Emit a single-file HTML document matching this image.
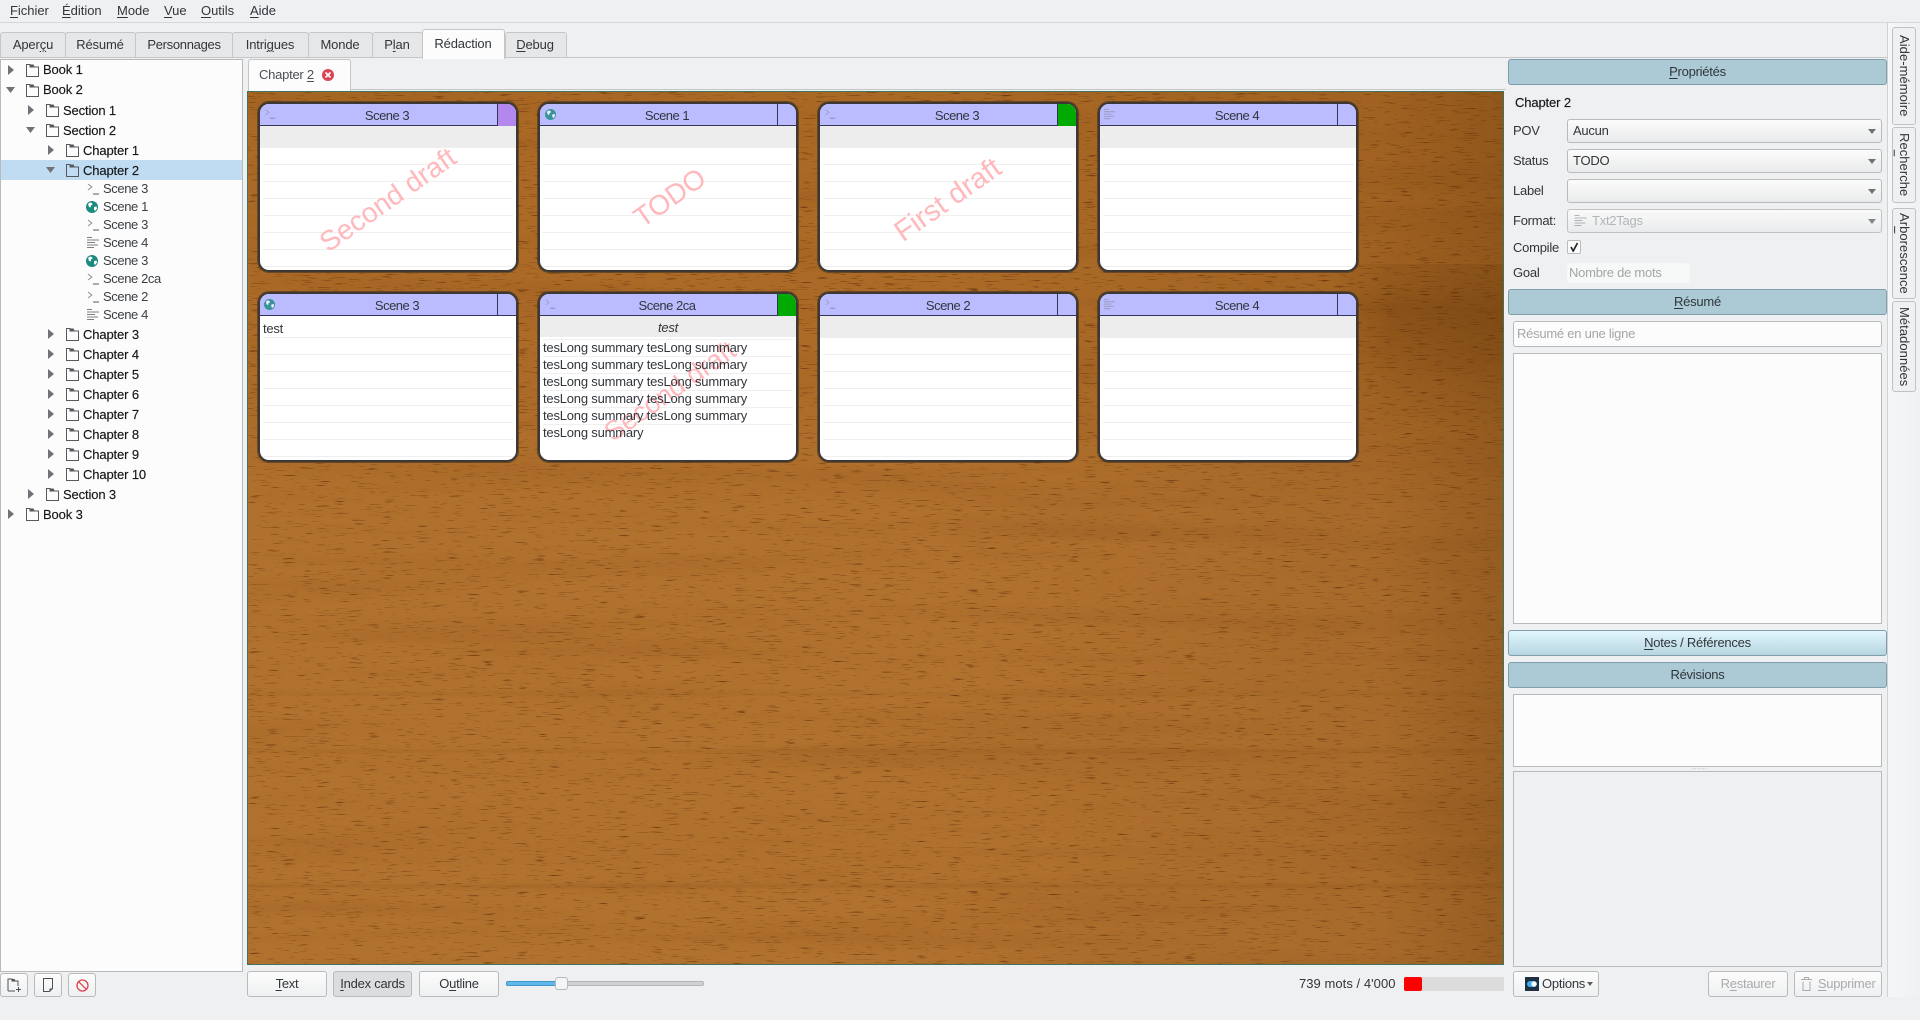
<!DOCTYPE html>
<html lang="fr"><head><meta charset="utf-8"><title>Manuskript</title>
<style>
html,body{margin:0;padding:0;width:1920px;height:1020px;overflow:hidden;background:#eff0f1}
body{position:relative;font:13px/16px "Liberation Sans",sans-serif;color:#31363b;letter-spacing:-.25px}
.a,.t,.c,.b,.tab,.hd,.box,svg.i{position:absolute}
.t{white-space:nowrap}
.c{white-space:nowrap;transform:translateX(-50%);letter-spacing:-.15px}
.m{letter-spacing:-.02px}
u{text-decoration-thickness:1px;text-underline-offset:2px}
.tab{top:32px;height:25px;background:#e6e7e8;border:1px solid #c4c6c8;border-bottom:0;border-radius:3px 3px 0 0;box-sizing:border-box}
.tr{color:#141618;letter-spacing:-.13px;-webkit-text-stroke:.15px #141618;margin-top:1px}
.sc{color:#3a3f44;letter-spacing:-.4px}
.b{box-sizing:border-box;height:26px;top:971px;border:1px solid #b8babc;border-radius:3px;background:linear-gradient(#fcfcfc,#eff0f1);text-align:center;line-height:24px}
.hd{left:1508px;width:379px;height:26px;box-sizing:border-box;border:1px solid #7f9dab;border-radius:3px;background:#abcad5;text-align:center;line-height:24px}
.combo{position:absolute;left:1567px;width:315px;height:24px;box-sizing:border-box;border:1px solid #b8babc;border-radius:3px;background:linear-gradient(#fcfcfc,#e9eaeb);line-height:22px;padding-left:5px;font-size:13px}
.combo:after{content:"";position:absolute;right:5px;top:9px;border:4px solid transparent;border-top:5px solid #6e7276;border-bottom:0}
.box{box-sizing:border-box;border:1px solid #b8babc;background:#fcfcfc}
.card{position:absolute;width:260px;height:170px;box-sizing:border-box;border:2px solid #3d3833;border-radius:11px;background:#fff;overflow:hidden;color:#31363b}
.sh{position:absolute;width:260px;height:170px;border-radius:11px;box-shadow:0 0 0 1px rgba(55,45,35,.55)}
.card .lines{position:absolute;left:3px;right:3px;top:27px;bottom:0;background:repeating-linear-gradient(transparent 0 16px,#efefef 16px 17px)}
.card .band{position:absolute;left:0;right:0;top:22px;height:22px;background:#ededed}
.card .head{position:absolute;left:0;right:0;top:0;height:22px;background:#bbf;border-bottom:1px solid #35355a;box-sizing:border-box}
.card .st{position:absolute;right:0;top:0;width:19px;height:22px;border-left:1px solid #35355a;box-sizing:border-box}
.card .wm{position:absolute;top:96px;left:128px;transform:translate(-50%,-50%) rotate(-35deg);color:#ffb8bc;font-size:28px;line-height:34px;white-space:nowrap;letter-spacing:0}
.card .ti{position:absolute;top:4px;white-space:nowrap;transform:translateX(-50%);letter-spacing:-.5px}
.card svg{position:absolute;left:5px;top:4px}
.vt{position:absolute;left:1892px;width:24px;box-sizing:border-box;border:1px solid #bfc1c3;border-radius:3px;background:#eff0f1;writing-mode:vertical-rl;text-align:center;line-height:22px;white-space:nowrap;letter-spacing:.05px}
.ln{position:absolute;background:#c4c6c8}
.p{margin-top:1px}
</style></head>
<body>
<svg width="0" height="0" style="position:absolute">
<defs>
<filter id="g1" x="0" y="0" width="100%" height="100%" color-interpolation-filters="sRGB">
<feTurbulence type="fractalNoise" baseFrequency="0.06 0.85" numOctaves="2" seed="11"/>
<feColorMatrix values="0 0 0 0 .42  0 0 0 0 .22  0 0 0 0 .05  5 0 0 0 -3.25"/>
</filter>
<filter id="g2" x="0" y="0" width="100%" height="100%" color-interpolation-filters="sRGB">
<feTurbulence type="fractalNoise" baseFrequency="0.002 0.035" numOctaves="3" seed="4"/>
<feColorMatrix values="0 0 0 0 .4  0 0 0 0 .2  0 0 0 0 .03  2.2 0 0 0 -1"/>
</filter>
<symbol id="fo" viewBox="0 0 13 13"><path d="M.5 12.500V.5h3.500v2.500h8.500v9.500z" fill="none" stroke="#55595d"/><path d="M4 .5h3.500l1.200 2.500H4z" fill="#55595d"/></symbol>
<symbol id="pr" viewBox="0 0 12 12"><path d="M1 1l3.800 3L1 7" fill="none" stroke="#8a8e92"/><path d="M6 11h6" stroke="#55595d"/></symbol>
<symbol id="tx" viewBox="0 0 12 12"><path d="M0 .5h5M0 3h12M0 5.500h8M0 8h11M0 10.500h7" stroke="#7b7f83"/></symbol>
<symbol id="gl" viewBox="0 0 12 12"><circle cx="6" cy="6" r="6" fill="#1b8a80"/><path d="M2 3l2-1.500 2 .5 .5 1.500-1.500 1-.5 2-1.500-.5zM8 6l2.500-.5.500 2-2 2.500-1-1.500z" fill="#fff"/></symbol>
</defs></svg>

<!-- menu -->
<div class="t m" style="left:10px;top:3px"><u>F</u>ichier</div>
<div class="t m" style="left:62px;top:3px"><u>É</u>dition</div>
<div class="t m" style="left:117px;top:3px"><u>M</u>ode</div>
<div class="t m" style="left:164px;top:3px"><u>V</u>ue</div>
<div class="t m" style="left:201px;top:3px"><u>O</u>utils</div>
<div class="t m" style="left:250px;top:3px"><u>A</u>ide</div>
<div class="ln" style="left:0;top:22px;width:1920px;height:1px;background:#d5d7d9"></div>

<!-- tabs -->
<div class="ln" style="left:0;top:57px;width:1888px;height:1px"></div>
<div class="tab" style="left:0;width:66px"></div><div class="c" style="left:33px;top:37px">Aper<u>ç</u>u</div>
<div class="tab" style="left:65px;width:71px"></div><div class="c" style="left:100px;top:37px">Résumé</div>
<div class="tab" style="left:135px;width:98px"></div><div class="c" style="left:184px;top:37px;letter-spacing:-.3px">Personnages</div>
<div class="tab" style="left:232px;width:77px"></div><div class="c" style="left:270px;top:37px">Intri<u>g</u>ues</div>
<div class="tab" style="left:308px;width:65px"></div><div class="c" style="left:340px;top:37px">Monde</div>
<div class="tab" style="left:372px;width:51px"></div><div class="c" style="left:397px;top:37px">P<u>l</u>an</div>
<div class="tab" style="left:505px;width:62px"></div><div class="c" style="left:535px;top:37px"><u>D</u>ebug</div>
<div class="tab" style="left:422px;width:83px;top:29px;height:30px;background:#fcfcfc"></div><div class="c" style="left:463px;top:36px">Rédaction</div>

<!-- tree -->
<div class="box" style="left:0;top:59px;width:243px;height:913px"></div>
<div class="a" style="left:1px;top:160px;width:241px;height:20px;background:#bfdcf3"></div>
<svg class="i" style="left:0;top:60px" width="110" height="470" fill="#6f7377">
<path d="M8 5l6 5-6 5zM28 45l6 5-6 5zM48 85l6 5-6 5zM48 269l6 5-6 5zM48 289l6 5-6 5zM48 309l6 5-6 5zM48 329l6 5-6 5zM48 349l6 5-6 5zM48 369l6 5-6 5zM48 389l6 5-6 5zM48 409l6 5-6 5zM28 429l6 5-6 5zM8 449l6 5-6 5z"/>
<path d="M6 27h9l-4.500 6zM26 67h9l-4.500 6zM46 107h9l-4.500 6z"/>
</svg>
<svg class="i" style="left:26px;top:64px" width="13" height="13"><use href="#fo"/></svg><div class="t tr" style="left:43px;top:62px;margin-top:0">Book 1</div>
<svg class="i" style="left:26px;top:84px" width="13" height="13"><use href="#fo"/></svg><div class="t tr" style="left:43px;top:82px;margin-top:0">Book 2</div>
<svg class="i" style="left:46px;top:104px" width="13" height="13"><use href="#fo"/></svg><div class="t tr" style="left:63px;top:102px">Section 1</div>
<svg class="i" style="left:46px;top:124px" width="13" height="13"><use href="#fo"/></svg><div class="t tr" style="left:63px;top:122px">Section 2</div>
<svg class="i" style="left:66px;top:144px" width="13" height="13"><use href="#fo"/></svg><div class="t tr" style="left:83px;top:142px">Chapter 1</div>
<svg class="i" style="left:66px;top:164px" width="13" height="13"><use href="#fo"/></svg><div class="t tr" style="left:83px;top:162px">Chapter 2</div>
<svg class="i" style="left:87px;top:183px" width="12" height="12"><use href="#pr"/></svg><div class="t sc" style="left:103px;top:181px">Scene 3</div>
<svg class="i" style="left:86px;top:201px" width="12" height="12"><use href="#gl"/></svg><div class="t sc" style="left:103px;top:199px">Scene 1</div>
<svg class="i" style="left:87px;top:219px" width="12" height="12"><use href="#pr"/></svg><div class="t sc" style="left:103px;top:217px">Scene 3</div>
<svg class="i" style="left:87px;top:237px" width="12" height="12"><use href="#tx"/></svg><div class="t sc" style="left:103px;top:235px">Scene 4</div>
<svg class="i" style="left:86px;top:255px" width="12" height="12"><use href="#gl"/></svg><div class="t sc" style="left:103px;top:253px">Scene 3</div>
<svg class="i" style="left:87px;top:273px" width="12" height="12"><use href="#pr"/></svg><div class="t sc" style="left:103px;top:271px">Scene 2ca</div>
<svg class="i" style="left:87px;top:291px" width="12" height="12"><use href="#pr"/></svg><div class="t sc" style="left:103px;top:289px">Scene 2</div>
<svg class="i" style="left:87px;top:309px" width="12" height="12"><use href="#tx"/></svg><div class="t sc" style="left:103px;top:307px">Scene 4</div>
<svg class="i" style="left:66px;top:328px" width="13" height="13"><use href="#fo"/></svg><div class="t tr" style="left:83px;top:326px">Chapter 3</div>
<svg class="i" style="left:66px;top:348px" width="13" height="13"><use href="#fo"/></svg><div class="t tr" style="left:83px;top:346px">Chapter 4</div>
<svg class="i" style="left:66px;top:368px" width="13" height="13"><use href="#fo"/></svg><div class="t tr" style="left:83px;top:366px">Chapter 5</div>
<svg class="i" style="left:66px;top:388px" width="13" height="13"><use href="#fo"/></svg><div class="t tr" style="left:83px;top:386px">Chapter 6</div>
<svg class="i" style="left:66px;top:408px" width="13" height="13"><use href="#fo"/></svg><div class="t tr" style="left:83px;top:406px">Chapter 7</div>
<svg class="i" style="left:66px;top:428px" width="13" height="13"><use href="#fo"/></svg><div class="t tr" style="left:83px;top:426px">Chapter 8</div>
<svg class="i" style="left:66px;top:448px" width="13" height="13"><use href="#fo"/></svg><div class="t tr" style="left:83px;top:446px">Chapter 9</div>
<svg class="i" style="left:66px;top:468px" width="13" height="13"><use href="#fo"/></svg><div class="t tr" style="left:83px;top:466px">Chapter 10</div>
<svg class="i" style="left:46px;top:488px" width="13" height="13"><use href="#fo"/></svg><div class="t tr" style="left:63px;top:486px">Section 3</div>
<svg class="i" style="left:26px;top:508px" width="13" height="13"><use href="#fo"/></svg><div class="t tr" style="left:43px;top:506px">Book 3</div>

<!-- chapter tab -->
<div class="ln" style="left:350px;top:89px;width:1156px;height:1px"></div>
<div class="a" style="left:248px;top:59px;width:103px;height:32px;box-sizing:border-box;background:#fcfcfc;border:1px solid #c4c6c8;border-bottom:0;border-radius:3px 3px 0 0"></div>
<div class="t" style="left:259px;top:67px;color:#4b5056">Chapter <u>2</u></div>
<svg class="i" style="left:322px;top:69px" width="12" height="12"><circle cx="6" cy="6" r="6" fill="#da4453"/><path d="M3.500 3.500l5 5M8.500 3.500l-5 5" stroke="#fff" stroke-width="1.600"/></svg>

<!-- wood -->
<div class="a" style="left:247px;top:91px;width:1257px;height:874px;box-sizing:border-box;border:1px solid #3c7460;overflow:hidden;background:#b2722f">
<div class="a" style="inset:0;background:linear-gradient(180deg,rgba(140,70,0,.22) 0,rgba(140,70,0,.16) 260px,rgba(0,0,0,0) 440px)"></div>
<div class="a" style="inset:0;background:linear-gradient(90deg,rgba(80,40,0,0) 0,rgba(80,40,0,0) 55%,rgba(80,40,0,.10) 90%,rgba(70,35,0,.26) 100%)"></div>
<svg class="a" style="left:0;top:0" width="1255" height="872">
<rect width="1255" height="872" filter="url(#g2)" opacity=".12"/>
<rect width="1255" height="872" filter="url(#g1)"/>
<rect width="1255" height="360" filter="url(#g1)" opacity=".6"/>
</svg>
<div class="a" style="left:0;right:0;top:172px;height:170px;background:linear-gradient(90deg,rgba(70,35,0,0) 1085px,rgba(70,35,0,.2) 1140px);-webkit-mask-image:linear-gradient(rgba(0,0,0,.6) 0,#000 30%,transparent 100%)"></div>
<div class="a" style="left:0;right:0;top:600px;height:4px;background:rgba(90,45,0,.06);filter:blur(1px)"></div>
<div class="a" style="left:0;right:0;top:657px;height:4px;background:rgba(90,45,0,.08);filter:blur(1px)"></div>
<div class="a" style="left:0;right:0;top:792px;height:4px;background:rgba(90,45,0,.09);filter:blur(1px)"></div>
</div>

<!-- cards -->
<div class="sh" style="left:258px;top:102px"></div><div class="sh" style="left:538px;top:102px"></div><div class="sh" style="left:818px;top:102px"></div><div class="sh" style="left:1098px;top:102px"></div>
<div class="sh" style="left:258px;top:292px"></div><div class="sh" style="left:538px;top:292px"></div><div class="sh" style="left:818px;top:292px"></div><div class="sh" style="left:1098px;top:292px"></div>
<div class="card" style="left:258px;top:102px"><div class="lines"></div><div class="band"></div><div class="wm">Second draft</div><div class="head"><div class="st" style="background:#b487ef"></div></div><svg width="10" height="12" style="opacity:.6"><use href="#pr"/></svg><div class="ti" style="left:127px">Scene 3</div></div>
<div class="card" style="left:538px;top:102px"><div class="lines"></div><div class="band"></div><div class="wm" style="left:130px;top:94px">TODO</div><div class="head"><div class="st"></div></div><svg width="11" height="11" style="left:5px;top:5px;opacity:.8"><use href="#gl"/></svg><div class="ti" style="left:127px">Scene 1</div></div>
<div class="card" style="left:818px;top:102px"><div class="lines"></div><div class="band"></div><div class="wm" style="left:128px;top:96px;font-size:29px">First draft</div><div class="head"><div class="st" style="background:#0a0"></div></div><svg width="10" height="12" style="opacity:.6"><use href="#pr"/></svg><div class="ti" style="left:137px">Scene 3</div></div>
<div class="card" style="left:1098px;top:102px"><div class="lines"></div><div class="band"></div><div class="head"><div class="st"></div></div><svg width="11" height="11" style="opacity:.55;left:4px;top:5px"><use href="#tx"/></svg><div class="ti" style="left:137px">Scene 4</div></div>

<div class="card" style="left:258px;top:292px"><div class="lines"></div><div class="head"><div class="st"></div></div><svg width="11" height="11" style="left:4px;top:5px;opacity:.8"><use href="#gl"/></svg><div class="ti" style="left:137px">Scene 3</div><div class="a t" style="left:3px;top:27px">test</div></div>
<div class="card" style="left:538px;top:292px"><div class="lines" style="top:29px;bottom:19px"></div><div class="band" style="height:21px"></div><div class="wm" style="left:130px;top:97px;font-size:27px">Second draft</div><div class="head"><div class="st" style="background:#0a0"></div></div><svg width="10" height="12" style="opacity:.6"><use href="#pr"/></svg><div class="ti" style="left:127px">Scene 2ca</div>
<div class="a t" style="left:0;right:0;top:26px;text-align:center;font-style:italic">test</div>
<div class="a t" style="left:3px;top:46px;letter-spacing:-.2px">tesLong summary tesLong summary</div>
<div class="a t" style="left:3px;top:63px;letter-spacing:-.2px">tesLong summary tesLong summary</div>
<div class="a t" style="left:3px;top:80px;letter-spacing:-.2px">tesLong summary tesLong summary</div>
<div class="a t" style="left:3px;top:97px;letter-spacing:-.2px">tesLong summary tesLong summary</div>
<div class="a t" style="left:3px;top:114px;letter-spacing:-.2px">tesLong summary tesLong summary</div>
<div class="a t" style="left:3px;top:131px;letter-spacing:-.2px">tesLong summary</div></div>
<div class="card" style="left:818px;top:292px"><div class="lines"></div><div class="band"></div><div class="head"><div class="st"></div></div><svg width="10" height="12" style="opacity:.6"><use href="#pr"/></svg><div class="ti" style="left:128px">Scene 2</div></div>
<div class="card" style="left:1098px;top:292px"><div class="lines"></div><div class="band"></div><div class="head"><div class="st"></div></div><svg width="11" height="11" style="opacity:.55;left:4px;top:5px"><use href="#tx"/></svg><div class="ti" style="left:137px">Scene 4</div></div>

<!-- right panel -->
<div class="hd" style="top:59px"><u>P</u>ropriétés</div>
<div class="t tr" style="left:1515px;top:94px">Chapter 2</div>
<div class="t p" style="left:1513px;top:122px">POV</div>
<div class="combo" style="top:119px">Aucun</div>
<div class="t p" style="left:1513px;top:152px">Status</div>
<div class="combo" style="top:149px">TODO</div>
<div class="t p" style="left:1513px;top:182px">Label</div>
<div class="combo" style="top:179px"></div>
<div class="t p" style="left:1513px;top:212px">Format:</div>
<div class="combo" style="top:209px;color:#a8abad;padding-left:24px;opacity:.85">Txt2Tags</div>
<svg class="i" style="left:1574px;top:215px;opacity:.55" width="13" height="12"><use href="#tx"/></svg>
<div class="t" style="left:1513px;top:240px">Compile</div>
<div class="a" style="left:1567px;top:240px;width:14px;height:14px;box-sizing:border-box;border:1px solid #b8babc;border-radius:2px;background:#fcfcfc"></div>
<svg class="i" style="left:1570px;top:242px" width="9" height="10"><path d="M1 5l2.200 4L7.500 1" fill="none" stroke="#232629" stroke-width="1.700"/></svg>
<div class="t p" style="left:1513px;top:264px">Goal</div>
<div class="a t" style="left:1567px;top:263px;width:123px;height:20px;background:#f7f8f8;border-radius:4px;line-height:19px;padding-left:2px;box-sizing:border-box;color:#a3a6a8">Nombre de mots</div>
<div class="hd" style="top:289px"><u>R</u>ésumé</div>
<div class="box" style="left:1513px;top:321px;width:369px;height:26px;border-radius:3px;line-height:24px;padding-left:3px;color:#a3a6a8">Résumé en une ligne</div>
<div class="box" style="left:1513px;top:353px;width:369px;height:271px"></div>
<div class="hd" style="top:630px;background:linear-gradient(#e2f6fc,#b6d6e1)"><u>N</u>otes / Références</div>
<div class="hd" style="top:662px">Révisions</div>
<div class="box" style="left:1513px;top:694px;width:369px;height:73px"></div>
<div class="t" style="left:1692px;top:759px;color:#b5b8ba;font-size:8px;letter-spacing:.3px">......</div>
<div class="box" style="left:1513px;top:771px;width:369px;height:196px;background:#eff0f1"></div>

<!-- dock -->
<div class="a" style="left:1888px;top:23px;width:32px;height:974px;background:linear-gradient(90deg,#f5f6f7,#f0f1f2)"></div>
<div class="ln" style="left:1887px;top:23px;width:1px;height:974px;background:#cfd1d3"></div>
<div class="vt" style="top:27px;height:98px">Aide-mémoire</div>
<div class="vt" style="top:127px;height:76px">Re<u>c</u>herche</div>
<div class="vt" style="top:208px;height:91px">Ar<u>b</u>orescence</div>
<div class="vt" style="top:301px;height:91px">Métadonnées</div>

<!-- bottom -->
<div class="b" style="left:0;width:28px;top:973px;height:24px"></div>
<svg class="i" style="left:7px;top:978px" width="15" height="15"><path d="M1 13V1h4v2h6v5M1 13h7" fill="none" stroke="#4d5156"/><path d="M5 1h2.500l1 2H5z" fill="#4d5156"/><path d="M11.500 9v5M9 11.500h5" stroke="#4d5156"/></svg>
<div class="b" style="left:34px;width:28px;top:973px;height:24px"></div>
<svg class="i" style="left:43px;top:978px" width="10" height="14"><path d="M.5.500h9v10l-3 3h-6z" fill="none" stroke="#4d5156"/><path d="M6.500 13.500v-3h3" fill="#4d5156"/></svg>
<div class="b" style="left:68px;width:28px;top:973px;height:24px"></div>
<svg class="i" style="left:76px;top:979px" width="13" height="13"><circle cx="6.500" cy="6.500" r="5.500" fill="none" stroke="#da4453" stroke-width="1.300"/><path d="M2.800 2.800l7.400 7.400" stroke="#da4453" stroke-width="1.300"/></svg>
<div class="b" style="left:247px;width:80px"><u>T</u>ext</div>
<div class="b" style="left:333px;width:79px;background:#dcdddf"><u>I</u>ndex cards</div>
<div class="b" style="left:419px;width:80px">O<u>u</u>tline</div>
<div class="a" style="left:506px;top:981px;width:198px;height:5px;box-sizing:border-box;background:#cfd1d3;border:1px solid #b4b6b8;border-radius:2px"></div>
<div class="a" style="left:506px;top:981px;width:52px;height:5px;box-sizing:border-box;background:#5fb7ea;border:1px solid #3f97ca;border-radius:2px"></div>
<div class="a" style="left:555px;top:977px;width:13px;height:13px;box-sizing:border-box;background:#f4f5f6;border:1px solid #b8babc;border-radius:3px"></div>
<div class="t" style="left:1299px;top:976px;letter-spacing:.05px">739 mots / 4'000</div>
<div class="a" style="left:1404px;top:977px;width:100px;height:14px;background:#dcdcdc"></div>
<div class="a" style="left:1404px;top:977px;width:18px;height:14px;background:#f00;border-radius:2px"></div>
<div class="b" style="left:1513px;width:86px"></div>
<svg class="i" style="left:1525px;top:977px" width="14" height="14"><rect width="14" height="14" fill="#1f2f44"/><rect x="2" y="4" width="10" height="6" rx="3" fill="#3daee9"/><circle cx="9" cy="7" r="2.600" fill="#fff"/></svg>
<div class="t" style="left:1542px;top:976px">Options</div>
<div class="a" style="left:1587px;top:982px;border:3px solid transparent;border-top:4px solid #5a5e62;border-bottom:0"></div>
<div class="b" style="left:1708px;width:80px;color:#a8abad">R<u>e</u>staurer</div>
<div class="b" style="left:1794px;width:88px;color:#a8abad;padding-left:14px">&nbsp;<u>S</u>upprimer</div>
<svg class="i" style="left:1801px;top:977px" width="11" height="14"><path d="M0 2.500h11M3.500 2.500V.5h4v2M2 4.500v9h7v-9" fill="none" stroke="#a8abad"/></svg>
</body></html>
